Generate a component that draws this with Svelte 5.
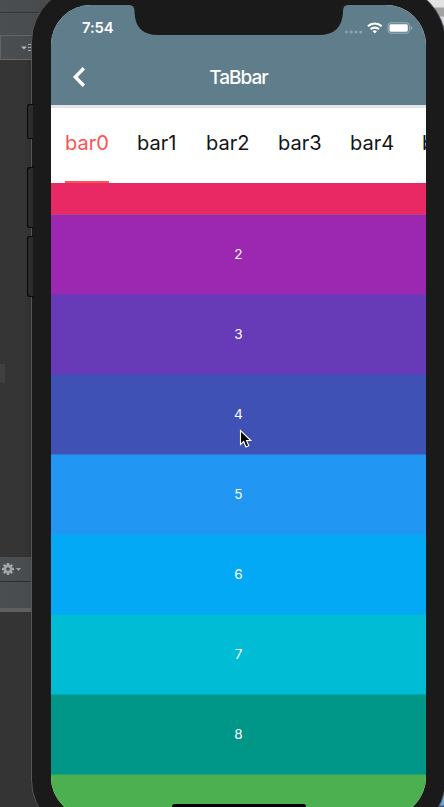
<script>
  const tabs = ['bar0', 'bar1', 'bar2', 'bar3', 'bar4', 'bar5'];
  const rows = [
    { n: 2, color: '#9c27b0', edge: '#7e31b4' },
    { n: 3, color: '#673ab7', edge: '#5046b6' },
    { n: 4, color: '#3f51b5', edge: '#3275d4' },
    { n: 5, color: '#2196f3', edge: '#14a0f3' },
    { n: 6, color: '#03a9f4', edge: '#02b2e4' },
    { n: 7, color: '#00bcd4', edge: '#00a9ae' },
    { n: 8, color: '#009688', edge: '#26a36c' },
  ];
</script>

<div class="desktop">
  <div class="ide">
    <div class="bar top"></div>
    <div class="bar tools">
      <svg width="32" height="22" viewBox="0 0 32 22">
        <path d="M21 10.500h6l-3 3z" fill="#b4b6b8" />
        <path d="M28 8.500h4M28 11.500h4M28 14.500h4" stroke="#a9abad" />
      </svg>
    </div>
    <div class="editor"></div>
    <div class="bar panel">
      <svg width="32" height="24" viewBox="0 0 32 24">
        <g transform="translate(8 12)">
          <circle r="3.100" fill="none" stroke="#a4a5a6" stroke-width="2.600" />
          {#each [0, 45, 90, 135, 180, 225, 270, 315] as a}
            <rect x="-1.200" y="-6" width="2.400" height="3" fill="#a4a5a6" transform="rotate({a})" />
          {/each}
        </g>
        <path d="M16 11h5l-2.500 3z" fill="#a4a5a6" />
        <path d="M31 15h1v3h-1z" fill="#85888a" />
      </svg>
    </div>
    <div class="bar sub"></div>
    <div class="editor-mark"></div>
  </div>
  <div class="right-edge"></div>

  <span class="side mute"></span>
  <span class="side up"></span>
  <span class="side down"></span>

  <div class="phone">
    <div class="screen">
      <header>
        <div class="status">
          <span class="time">7:54</span>
          <svg class="signals" width="70" height="14" viewBox="0 0 70 14">
            <g fill="#92a5af">
              <circle cx="2.500" cy="11" r="1.500" /><circle cx="7.300" cy="11" r="1.500" />
              <circle cx="12" cy="11" r="1.500" /><circle cx="16.700" cy="11" r="1.500" />
            </g>
            <g fill="none" stroke="#fff" stroke-width="2.100">
              <path d="M23.900 5.300a9.900 9.900 0 0 1 13.800 0" />
              <path d="M26.600 8.300a6 6 0 0 1 8.400 0" />
            </g>
            <path d="M28.600 10.200a3.300 3.300 0 0 1 4.400 0L30.800 12.500z" fill="#fff" />
            <rect x="44" y="1.800" width="21.400" height="10.400" rx="2.800" fill="none" stroke="#a0b1b9" />
            <rect x="45.500" y="3.300" width="18.300" height="7.400" rx="1.400" fill="#fff" />
            <path d="M66.800 5.100q1.600.6 1.600 1.900t-1.600 1.900z" fill="#a0b1b9" />
          </svg>
        </div>
        <div class="nav">
          <svg class="back" width="14" height="22" viewBox="0 0 14 22">
            <path d="M11.800 2.300L3.300 11l8.500 8.700" fill="none" stroke="#fff" stroke-width="3.400" />
          </svg>
          <h1>TaBbar</h1>
        </div>
      </header>
      <nav class="tabs">
        {#each tabs as tab, i}
          <span class="tab" class:active={i === 0} class:narrow={i === 1}>{tab}</span>
        {/each}
      </nav>
      <main>
        <div class="row first"></div>
        {#each rows as row}
          <div class="row" style="background: {row.color}; border-color: {row.edge}">{row.n}</div>
        {/each}
        <div class="row last"></div>
      </main>
      <svg class="notch" width="219" height="30" viewBox="0 0 219 30">
        <path d="M0 0Q5.500 0 5.500 6V7Q6 30 29 30H190Q213 30 214 7V6Q214 0 219 0z" fill="#1a1a1a" />
      </svg>
      <span class="home"></span>
    </div>
  </div>

  <svg class="cursor" width="14" height="22" viewBox="0 0 14 22">
    <path d="M1.500 1.500V15.500L4.700 12.500L7 18L9.800 16.800L7.500 11.500H11.800z" fill="#000" stroke="#fff" stroke-width="1.100" />
  </svg>
</div>

<style>
  :global(body) {
    margin: 0;
  }
  .desktop {
    position: relative;
    width: 444px;
    height: 807px;
    overflow: hidden;
    background: #343434;
    font-family: Inter, 'Liberation Sans', sans-serif;
  }
  .ide {
    position: absolute;
    inset: 0 auto 0 0;
    width: 60px;
    display: flex;
    flex-direction: column;
  }
  .bar {
    box-sizing: border-box;
    background: linear-gradient(90deg, #4c4f51, #45494b);
    flex: none;
  }
  .bar svg {
    display: block;
  }
  .top {
    height: 13px;
    border-bottom: 1px solid #343638;
    margin-bottom: 0;
  }
  .tools {
    height: 47px;
    padding-top: 23px;
    border-bottom: 1px solid #686868;
    background:
      linear-gradient(#646464, #646464) 0 22px / 100% 1px no-repeat,
      linear-gradient(#646464, #646464) 0 22px / 1px 24px no-repeat,
      linear-gradient(90deg, #4c4f51, #45494b);
  }
  .editor {
    height: 497px;
    background: linear-gradient(90deg, #353535 24px, #2e2e2e 33px);
  }
  .panel {
    height: 25px;
    border-bottom: 1px solid #2c2e2f;
  }
  .sub {
    height: 30px;
    border-bottom: 4px solid #5e6060;
  }
  .editor-mark {
    position: absolute;
    left: 0;
    top: 364px;
    width: 5px;
    height: 19px;
    background: #404040;
  }
  .right-edge {
    position: absolute;
    right: 0;
    top: 0;
    width: 44px;
    height: 807px;
    background: linear-gradient(#e3e3e4 7px, #a2a2a3 8px 16px, #d6d7da 17px 24px, #3d5a83 27px 60px, #1a1a1a 60px 780px, #69a7cd 781px 805px, #34558b 806px);
  }
  .side {
    position: absolute;
    box-sizing: border-box;
    left: 27px;
    width: 6px;
    z-index: 1;
    background: #2b2b2b;
    border: 1px solid #080808;
    border-right: 0;
    border-radius: 3px 0 0 3px;
  }
  .mute {
    top: 104px;
    height: 35px;
  }
  .up {
    top: 167px;
    height: 61px;
  }
  .down {
    top: 236px;
    height: 61px;
  }
  .phone {
    position: absolute;
    box-sizing: border-box;
    left: 31px;
    top: -15px;
    width: 415px;
    height: 852px;
    padding: 19px;
    border: 1px solid #565656;
    border-radius: 57px;
    background: #1a1a1a;
  }
  .screen {
    position: relative;
    width: 375px;
    height: 812px;
    overflow: hidden;
    border-radius: 40px;
    background: #fff;
  }
  header {
    box-sizing: border-box;
    height: 103px;
    background: #607d8b;
    border-bottom: 3px solid #e3e5e6;
    color: #fff;
  }
  .status {
    height: 44px;
    display: flex;
    justify-content: space-between;
    padding: 0 12px 0 31px;
  }
  .time {
    padding-top: 13px;
    font-size: 14.800px;
    line-height: 20px;
    font-weight: 600;
    letter-spacing: -0.1px;
  }
  .signals {
    margin-top: 16px;
  }
  .nav {
    height: 56px;
    display: grid;
    grid-template-columns: 56px 1fr 56px;
    align-items: center;
  }
  .back {
    margin-left: 21px;
  }
  h1 {
    margin: 0;
    font-size: 19px;
    font-weight: 500;
    letter-spacing: -1px;
    text-align: center;
  }
  .tabs {
    display: flex;
    height: 75px;
    padding-left: 14px;
    gap: 28px;
    background: #fff;
  }
  .tab {
    box-sizing: border-box;
    flex: none;
    width: 44px;
    line-height: 71px;
    font-size: 20px;
    white-space: nowrap;
    color: #151515;
    border-bottom: 2px solid transparent;
  }
  .narrow {
    width: 41px;
  }
  .active {
    color: #ff5252;
    border-color: #ff5252;
  }
  .row {
    box-sizing: border-box;
    height: 80px;
    padding-bottom: 1px;
    border-bottom: 1px solid;
    display: flex;
    align-items: center;
    justify-content: center;
    color: #fff;
    font-size: 13.600px;
  }
  .first {
    height: 32px;
    background: #e92963;
    border-color: #ad4588;
  }
  .last {
    background: #4caf50;
    border-color: #4caf50;
  }
  .notch {
    position: absolute;
    top: 0;
    left: 78px;
  }
  .home {
    position: absolute;
    left: 121px;
    bottom: 8px;
    width: 134px;
    height: 5px;
    border-radius: 3px;
    background: #000;
  }
  .cursor {
    position: absolute;
    left: 239px;
    top: 429px;
  }
</style>
